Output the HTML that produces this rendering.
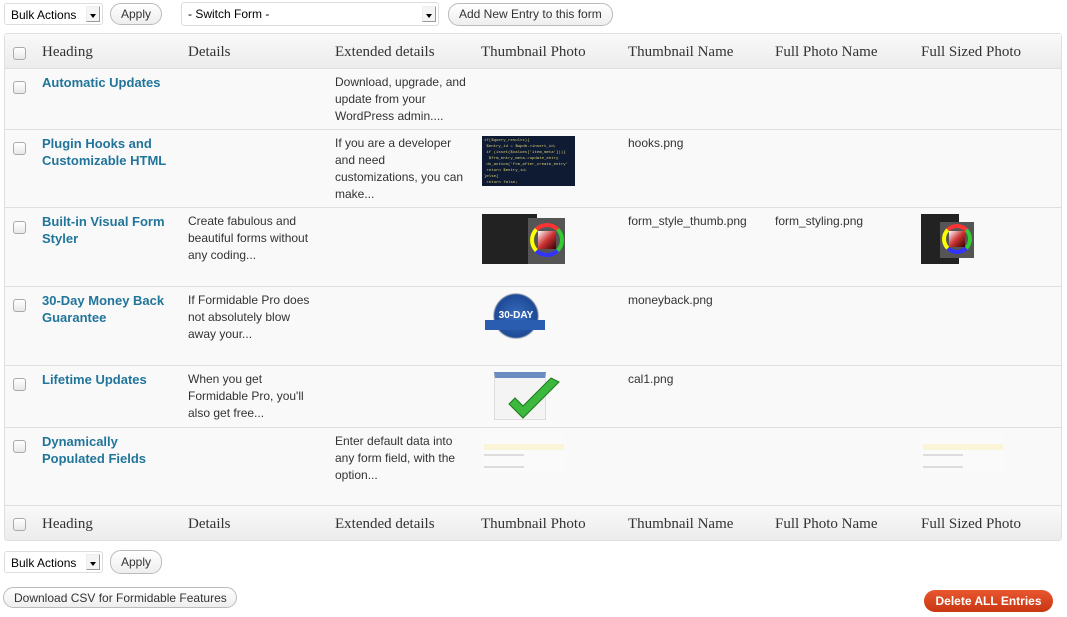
<!DOCTYPE html>
<html><head><meta charset="utf-8"><style>
*{margin:0;padding:0;box-sizing:border-box}
body{width:1067px;height:617px;background:#fff;font-family:"Liberation Sans",sans-serif;font-size:12px;color:#333;position:relative;overflow:hidden}
.a{position:absolute}
.sel{position:absolute;height:22px;border:1px solid #ddd;background:#fff;font-size:12px;color:#000;padding:4px 6px;border-radius:3px}
.sel .ar{position:absolute;right:2px;top:2px;width:14px;height:16px;border:1px solid #999;border-top-color:#eee;border-left-color:#eee;background:#f4f4f4}
.sel .ar:after{content:"";position:absolute;left:3px;top:7px;border:3px solid transparent;border-top:4px solid #000}
.btn{position:absolute;height:22px;border:1px solid #bbb;border-radius:11px;background:linear-gradient(#fff,#eee);font-size:12px;color:#333;padding:3px 10px;white-space:nowrap}
.tbl{position:absolute;left:4px;top:33px;width:1058px;height:508px;border:1px solid #dfdfdf;background:#f9f9f9;border-radius:3px}
.hd{position:absolute;left:0;width:1056px;height:35px;background:linear-gradient(#f9f9f9,#ececec);font-family:"Liberation Serif",serif;font-size:15px;color:#333}
.hd span{position:absolute;top:10px}
.row{position:absolute;left:0;width:1056px;border-top:1px solid #dfdfdf}
.cb{position:absolute;left:8px;width:13px;height:13px;border:1px solid #aaa;border-radius:3px;background:linear-gradient(#fff,#e8e8e8)}
.t{position:absolute;line-height:17px;font-size:12px;color:#333}
.h{position:absolute;font-weight:bold;color:#21759b;font-size:13px;line-height:17px}
</style></head><body>
<div class="sel" style="left:4px;top:3px;width:99px">Bulk Actions<div class="ar"></div></div>
<div class="btn" style="left:110px;top:3px">Apply</div>
<div class="sel" style="left:181px;top:2px;width:258px;height:24px">- Switch Form -<div class="ar" style="top:3px"></div></div>
<div class="btn" style="left:448px;top:3px;height:23px">Add New Entry to this form</div>

<div class="tbl">
 <div class="hd" style="top:0;border-bottom:1px solid #dfdfdf">
  <div class="cb" style="top:13px"></div>
  <span style="left:37px">Heading</span><span style="left:183px">Details</span><span style="left:330px">Extended details</span><span style="left:476px">Thumbnail Photo</span><span style="left:623px">Thumbnail Name</span><span style="left:770px">Full Photo Name</span><span style="left:916px">Full Sized Photo</span>
 </div>
 <div class="row" style="top:34px;height:61px;border-top:0">
  <div class="cb" style="top:13px"></div>
  <div class="h" style="left:37px;top:6px">Automatic Updates</div>
  <div class="t" style="left:330px;top:6px">Download, upgrade, and<br>update from your<br>WordPress admin....</div>
 </div>
 <div class="row" style="top:95px;height:78px">
  <div class="cb" style="top:12px"></div>
  <div class="h" style="left:37px;top:5px">Plugin Hooks and<br>Customizable HTML</div>
  <div class="t" style="left:330px;top:5px">If you are a developer<br>and need<br>customizations, you can<br>make...</div>
  <div class="a" style="left:477px;top:6px;width:93px;height:50px;background:#0f1a33;font:4px 'Liberation Mono',monospace;color:#d8d070;padding:2px;line-height:6px;overflow:hidden;white-space:nowrap">if($query_results){<br>&nbsp;$entry_id = $wpdb->insert_id;<br>&nbsp;if (isset($values['item_meta'])){<br>&nbsp;&nbsp;$frm_entry_meta->update_entry<br>&nbsp;do_action('frm_after_create_entry'<br>&nbsp;return $entry_id;<br>}else{<br>&nbsp;return false;</div>
  <div class="t" style="left:623px;top:5px">hooks.png</div>
 </div>
 <div class="row" style="top:173px;height:79px">
  <div class="cb" style="top:13px"></div>
  <div class="h" style="left:37px;top:5px">Built-in Visual Form<br>Styler</div>
  <div class="t" style="left:183px;top:5px">Create fabulous and<br>beautiful forms without<br>any coding...</div>
  <div class="a" style="left:477px;top:6px;width:55px;height:50px;background:#222"></div>
  <div class="a" style="left:523px;top:10px;width:37px;height:46px;background:#555"><div class="a" style="left:2px;top:5px;width:34px;height:34px;border-radius:50%;border:4px solid;border-color:#f33 #3c3 #33f #ff0"></div><div class="a" style="left:10px;top:13px;width:18px;height:18px;background:linear-gradient(135deg,#fff,#c33,#300)"></div></div>
  <div class="t" style="left:623px;top:5px">form_style_thumb.png</div>
  <div class="t" style="left:770px;top:5px">form_styling.png</div>
  <div class="a" style="left:916px;top:6px;width:38px;height:50px;background:#222"></div>
  <div class="a" style="left:935px;top:14px;width:34px;height:36px;background:#555"><div class="a" style="left:2px;top:2px;width:30px;height:30px;border-radius:50%;border:4px solid;border-color:#f33 #3c3 #33f #ff0"></div><div class="a" style="left:9px;top:9px;width:16px;height:16px;background:linear-gradient(135deg,#fff,#c33,#300)"></div></div>
 </div>
 <div class="row" style="top:252px;height:79px">
  <div class="cb" style="top:12px"></div>
  <div class="h" style="left:37px;top:5px">30-Day Money Back<br>Guarantee</div>
  <div class="t" style="left:183px;top:5px">If Formidable Pro does<br>not absolutely blow<br>away your...</div>
  <div class="a" style="left:488px;top:6px;width:46px;height:46px;border-radius:50%;background:radial-gradient(#3a6ec0,#1e4a96 65%,#ccc 70%);color:#fff;font:bold 10px 'Liberation Sans';text-align:center;line-height:46px">30-DAY</div>
  <div class="a" style="left:480px;top:33px;width:60px;height:10px;background:#2a5db0"></div>
  <div class="t" style="left:623px;top:5px">moneyback.png</div>
 </div>
 <div class="row" style="top:331px;height:62px">
  <div class="cb" style="top:12px"></div>
  <div class="h" style="left:37px;top:5px">Lifetime Updates</div>
  <div class="t" style="left:183px;top:5px">When you get<br>Formidable Pro, you'll<br>also get free...</div>
  <div class="a" style="left:489px;top:6px;width:52px;height:48px;background:#f4f4f4;border:1px solid #ddd;border-top:6px solid #6b8cc0"></div>
  <svg class="a" style="left:500px;top:10px" width="58" height="50"><path d="M4 28 L18 42 L54 6 L46 2 L18 30 L10 22 Z" fill="#3cb83c" stroke="#1d7a1d"/></svg>
  <div class="t" style="left:623px;top:5px">cal1.png</div>
 </div>
 <div class="row" style="top:393px;height:78px">
  <div class="cb" style="top:12px"></div>
  <div class="h" style="left:37px;top:5px">Dynamically<br>Populated Fields</div>
  <div class="t" style="left:330px;top:5px">Enter default data into<br>any form field, with the<br>option...</div>
  <div class="a" style="left:477px;top:6px;width:83px;height:40px;background:#fafafa"><div class="a" style="left:2px;top:10px;width:80px;height:6px;background:#fbf5d8"></div><div class="a" style="left:2px;top:20px;width:40px;height:2px;background:#ddd"></div><div class="a" style="left:2px;top:32px;width:40px;height:2px;background:#ddd"></div></div>
  <div class="a" style="left:916px;top:6px;width:83px;height:40px;background:#fafafa"><div class="a" style="left:2px;top:10px;width:80px;height:6px;background:#fbf5d8"></div><div class="a" style="left:2px;top:20px;width:40px;height:2px;background:#ddd"></div><div class="a" style="left:2px;top:32px;width:40px;height:2px;background:#ddd"></div></div>
 </div>
 <div class="hd" style="top:471px;border-top:1px solid #dfdfdf;height:35px">
  <div class="cb" style="top:12px"></div>
  <span style="left:37px">Heading</span><span style="left:183px">Details</span><span style="left:330px">Extended details</span><span style="left:476px">Thumbnail Photo</span><span style="left:623px">Thumbnail Name</span><span style="left:770px">Full Photo Name</span><span style="left:916px">Full Sized Photo</span>
 </div>
</div>

<div class="sel" style="left:4px;top:551px;width:99px">Bulk Actions<div class="ar"></div></div>
<div class="btn" style="left:110px;top:550px;height:24px;padding-top:4px">Apply</div>
<div class="btn" style="left:3px;top:587px;width:234px;height:21px;padding:3px 10px">Download CSV for Formidable Features</div>
<div class="a" style="left:924px;top:590px;width:129px;height:22px;border-radius:11px;background:linear-gradient(#e8572f,#c83612);color:#fff;font-weight:bold;font-size:12px;text-align:center;line-height:22px">Delete ALL Entries</div>
</body></html>
